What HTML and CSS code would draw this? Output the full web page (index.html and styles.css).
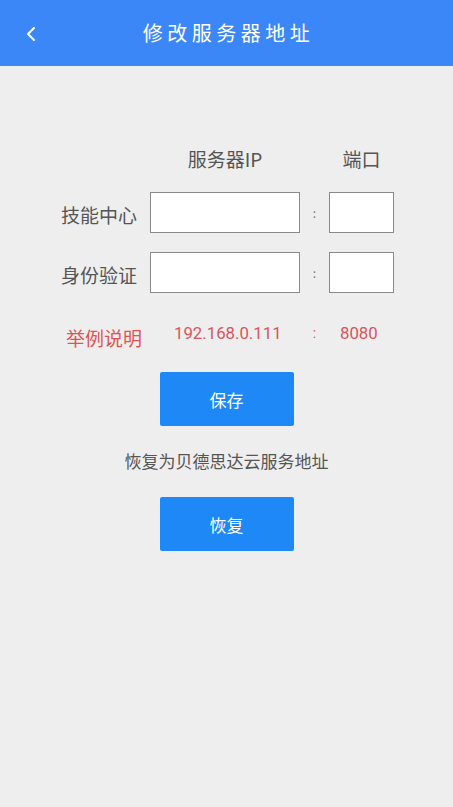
FILE: index.html
```html
<!DOCTYPE html>
<html lang="zh">
<head>
<meta charset="utf-8">
<title>修改服务器地址</title>
<link rel="stylesheet" href="styles.css">
</head>
<body>
<header class="topbar">
  <span class="back"><svg width="12" height="16" viewBox="0 0 12 16"><path d="M9 2 L3 8 L9 14" fill="none" stroke="#fff" stroke-width="2" stroke-linecap="round" stroke-linejoin="round"/></svg></span>
  <h1 class="title">修改服务器地址</h1>
</header>
<main class="content">
  <div class="grid">
    <div class="row heads">
      <span class="label"></span>
      <span class="ip head">服务器IP</span>
      <span class="sep"></span>
      <span class="port head">端口</span>
    </div>
    <div class="row">
      <span class="label">技能中心</span>
      <input class="ip box" type="text">
      <span class="sep">:</span>
      <input class="port box" type="text">
    </div>
    <div class="row">
      <span class="label">身份验证</span>
      <input class="ip box" type="text">
      <span class="sep">:</span>
      <input class="port box" type="text">
    </div>
    <div class="row example">
      <span class="label ex-label">举例说明</span>
      <span class="ip ex-ip">192.168.0.111</span>
      <span class="sep ex-sep">:</span>
      <span class="port ex-port">8080</span>
    </div>
  </div>
  <button class="btn save">保存</button>
  <p class="hint">恢复为贝德思达云服务地址</p>
  <button class="btn restore">恢复</button>
</main>
</body>
</html>
```
FILE: styles.css
```css
html, body {
  margin: 0;
  padding: 0;
  background: #eeeeee;
  font-family: "Noto Sans CJK SC", "Roboto", sans-serif;
  width: 453px;
  height: 807px;
  overflow: hidden;
}
.topbar {
  height: 66px;
  background: #3c87f7;
  display: flex;
  align-items: center;
  justify-content: center;
  position: relative;
}
.back {
  position: absolute;
  left: 25px;
  top: 26px;
  width: 12px;
  height: 16px;
  display: flex;
}
.title {
  margin: 0;
  color: #fff;
  font-size: 20px;
  font-weight: normal;
  letter-spacing: 4.5px;
  margin-left: 4px;
  line-height: 1;
}
.content {
  display: flex;
  flex-direction: column;
  align-items: center;
  padding-top: 78px;
}
.grid {
  display: flex;
  flex-direction: column;
  width: 453px;
}
.row {
  display: flex;
  align-items: center;
  height: 41px;
  margin-bottom: 19px;
}
.row.heads {
  height: 28px;
  margin-bottom: 20px;
}
.label {
  width: 76px;
  margin-left: 61px;
  margin-right: 13px;
  font-size: 19px;
  color: #555;
  white-space: nowrap;
  position: relative;
  top: 2px;
}
.ip {
  width: 150px;
  box-sizing: border-box;
}
.port {
  width: 65px;
  box-sizing: border-box;
}
.sep {
  width: 29px;
  text-align: center;
  color: #777;
  font-size: 12px;
}
.head {
  text-align: center;
  font-size: 19px;
  color: #555;
}
.box {
  height: 41px;
  border: 1px solid #8a8a8a;
  background: #fff;
  margin: 0;
  padding: 0 6px;
  outline: none;
  font-size: 16px;
}
.example {
  height: 30px;
  margin-top: 6px;
  margin-bottom: 24px;
}
.ex-label {
  color: #e05353;
  margin-left: 66px;
  margin-right: 8px;
  top: 4px;
}
.ex-ip, .ex-port, .ex-sep {
  color: #d9555c;
  font-family: "Roboto", sans-serif;
  font-size: 16.8px;
}
.ex-ip {
  padding-left: 24px;
}
.ex-sep {
  font-size: 14px;
}
.ex-port {
  padding-left: 11px;
}
.btn {
  width: 134px;
  height: 54px;
  background: #1e88f7;
  color: #fff;
  border: none;
  border-radius: 2px;
  font-family: "Noto Sans CJK SC", sans-serif;
  font-size: 17px;
  padding: 0;
}
.hint {
  margin: 23px 0 24px;
  font-size: 17px;
  color: #555;
  line-height: 24px;
}
```
